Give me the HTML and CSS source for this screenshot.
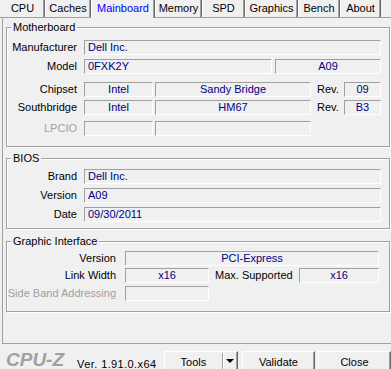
FILE: index.html
```html
<!DOCTYPE html>
<html lang="en">
<head>
    <meta charset="UTF-8">
    <title>CPU-Z</title>
    <link rel="stylesheet" href="styles.css">
</head>
<body>
    <div class="tabs">
        <div class="tab t-cpu">CPU</div>
        <div class="tab t-caches">Caches</div>
        <div class="tab t-main active">Mainboard</div>
        <div class="tab t-mem">Memory</div>
        <div class="tab t-spd">SPD</div>
        <div class="tab t-gfx">Graphics</div>
        <div class="tab t-bench">Bench</div>
        <div class="tab t-about">About</div>
    </div>

    <div class="panel">
        <div class="group mb">
            <div class="group-title">Motherboard</div>
            <div class="row r-manuf">
                <div class="label">Manufacturer</div>
                <div class="field w-full">Dell Inc.</div>
            </div>
            <div class="row r-model">
                <div class="label">Model</div>
                <div class="field w-model">0FXK2Y</div>
                <div class="field w-model2 center">A09</div>
            </div>
            <div class="row r-chipset">
                <div class="label">Chipset</div>
                <div class="field w-small center">Intel</div>
                <div class="field w-mid center">Sandy Bridge</div>
                <div class="rev">Rev.</div>
                <div class="field w-rev center">09</div>
            </div>
            <div class="row r-south">
                <div class="label">Southbridge</div>
                <div class="field w-small center">Intel</div>
                <div class="field w-mid center">HM67</div>
                <div class="rev">Rev.</div>
                <div class="field w-rev center">B3</div>
            </div>
            <div class="row r-lpcio">
                <div class="label disabled">LPCIO</div>
                <div class="field w-small"></div>
                <div class="field w-mid"></div>
            </div>
        </div>

        <div class="group bios">
            <div class="group-title">BIOS</div>
            <div class="row">
                <div class="label">Brand</div>
                <div class="field w-full">Dell Inc.</div>
            </div>
            <div class="row">
                <div class="label">Version</div>
                <div class="field w-full">A09</div>
            </div>
            <div class="row">
                <div class="label">Date</div>
                <div class="field w-full">09/30/2011</div>
            </div>
        </div>

        <div class="group gi">
            <div class="group-title">Graphic Interface</div>
            <div class="row r-ver">
                <div class="label">Version</div>
                <div class="field w-gver center">PCI-Express</div>
            </div>
            <div class="row r-link">
                <div class="label">Link Width</div>
                <div class="field w-link center">x16</div>
                <div class="max">Max. Supported</div>
                <div class="field w-max center">x16</div>
            </div>
            <div class="row r-side">
                <div class="label disabled">Side Band Addressing</div>
                <div class="field w-link"></div>
            </div>
        </div>
    </div>

    <div class="footer">
        <div class="logo">CPU-Z</div>
        <div class="version">Ver. 1.91.0.x64</div>
        <div class="button tools">
            <span class="btn-label">Tools</span>
            <span class="drop"><span class="arrow"></span></span>
        </div>
        <div class="button validate">Validate</div>
        <div class="button close">Close</div>
    </div>
</body>
</html>
```

FILE: styles.css
```css
body {
    margin: 0;
    width: 391px;
    height: 369px;
    overflow: hidden;
    background: #f0f0f0;
    font-family: "Liberation Sans", Arial, sans-serif;
    font-size: 11px;
    color: #000;
}

/* tab strip */
.tabs {
    display: flex;
    align-items: flex-start;
    height: 17px;
    border-bottom: 1px solid #a0a0a0;
}
.tab {
    box-sizing: border-box;
    height: 17px;
    line-height: 17px;
    text-align: center;
    border-left: 1px solid #fff;
    border-right: 1px solid #696969;
    box-shadow: inset -1px 0 #a0a0a0;
}
.tab.active {
    height: 18px;
    background: #f0f0f0;
    color: #0000ff;
    position: relative;
    z-index: 1;
}
.t-cpu { width: 45px; border-left-color: transparent; }
.t-caches { width: 46px; }
.t-main { width: 64px; }
.t-mem { width: 47px; }
.t-spd { width: 43px; }
.t-gfx { width: 53px; }
.t-bench { width: 42px; }
.t-about { width: 41px; }

/* main panel */
.panel {
    box-sizing: border-box;
    width: 400px;
    height: 326px;
    margin-left: 2px;
    padding-top: 9px;
    border-left: 1px solid #a0a0a0;
    border-bottom: 1px solid #a0a0a0;
}
.group {
    box-sizing: border-box;
    width: 384px;
    margin-left: 3px;
    border: 1px solid #a0a0a0;
    box-shadow: inset 1px 1px #fff, 1px 1px #fff;
}
.group-title {
    display: table;
    margin: -7px 0 0 4px;
    padding: 0 2px;
    line-height: 13px;
    background: #f0f0f0;
}
.mb { padding-bottom: 10px; }
.bios { margin-top: 11px; padding-bottom: 6px; }
.gi { margin-top: 12px; padding-bottom: 10px; }

.row {
    display: flex;
    margin-top: 4px;
}
.r-manuf { margin-top: 6px; }
.r-chipset { margin-top: 8px; }
.r-south { margin-top: 3px; }
.r-lpcio { margin-top: 6px; }
.r-ver { margin-top: 3px; }
.r-link { margin-top: 2px; }
.r-side { margin-top: 3px; }

.label {
    width: 70px;
    margin-right: 7px;
    text-align: right;
    line-height: 15px;
    white-space: nowrap;
}
.gi .label {
    width: 109px;
    margin-right: 9px;
}
.label.disabled { color: #a0a0a0; }

.field {
    box-sizing: border-box;
    height: 15px;
    line-height: 13px;
    padding-left: 3px;
    border-top: 1px solid #a0a0a0;
    border-left: 1px solid #a0a0a0;
    border-bottom: 1px solid #fff;
    border-right: 1px solid #fff;
    color: #000080;
    white-space: nowrap;
}
.field.center {
    padding-left: 0;
    text-align: center;
}
.w-full { width: 297px; }
.w-model { width: 188px; margin-right: 3px; }
.w-model2 { width: 106px; }
.w-small { width: 69px; margin-right: 2px; }
.w-mid { width: 156px; }
.w-rev { width: 37px; }
.w-gver { width: 254px; }
.w-link { width: 84px; }
.w-max { width: 80px; }

.rev {
    width: 27px;
    margin-left: 6px;
    line-height: 15px;
}
.max {
    width: 84px;
    margin-left: 6px;
    line-height: 15px;
    white-space: nowrap;
}

/* bottom bar */
.footer {
    display: flex;
    align-items: flex-start;
    height: 25px;
}
.logo {
    width: 66px;
    margin: 9px 0 0 6px;
    font-size: 19px;
    font-weight: bold;
    font-style: italic;
    line-height: 14px;
    color: #a0a0a0;
}
.version {
    width: 88px;
    margin: 7px 0 0 6px;
    padding-top: 2px;
    line-height: 23px;
    letter-spacing: 0.4px;
}
.button {
    box-sizing: border-box;
    height: 23px;
    margin-top: 7px;
    line-height: 20px;
    text-align: center;
    background: #f0f0f0;
    border-top: 1px solid #fff;
    border-left: 1px solid #fff;
    border-right: 1px solid #696969;
    border-bottom: 1px solid #696969;
    box-shadow: inset -1px -1px #a0a0a0;
}
.tools {
    display: flex;
    width: 75px;
}
.btn-label { flex: 1; }
.drop {
    display: flex;
    justify-content: center;
    width: 14px;
    margin-top: 1px;
    border-left: 1px solid #a0a0a0;
    box-shadow: inset 1px 0 #fff;
}
.arrow {
    width: 0;
    height: 0;
    margin-top: 6px;
    border-left: 4px solid transparent;
    border-right: 4px solid transparent;
    border-top: 4px solid #000;
}
.validate { width: 74px; margin-left: 4px; }
.close { width: 74px; margin-left: 3px; }
```
